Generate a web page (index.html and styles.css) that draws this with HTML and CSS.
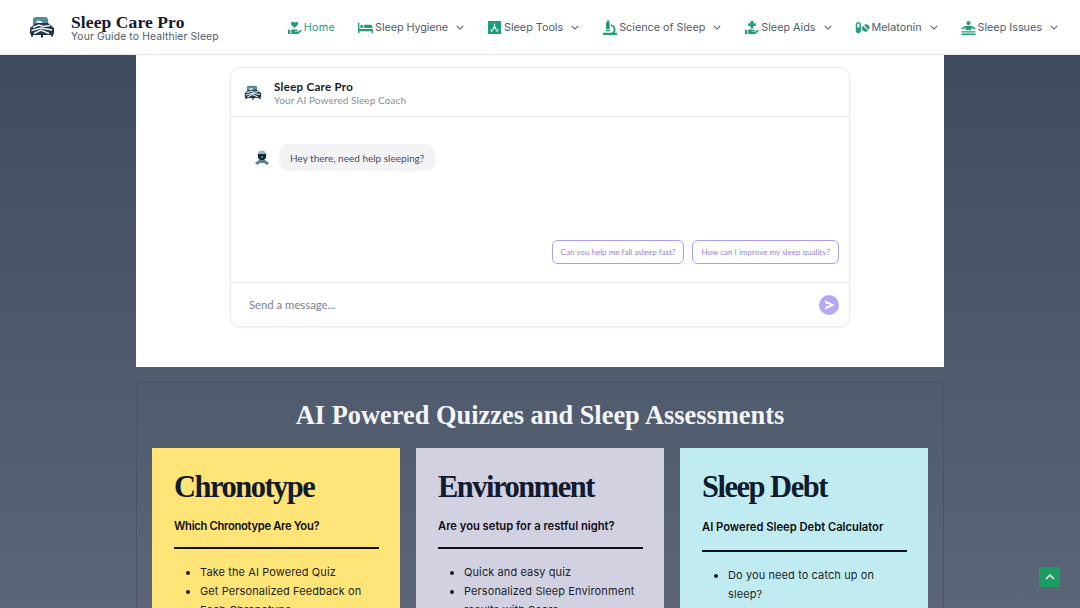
FILE: index.html
```html
<!DOCTYPE html>
<html lang="en">
<head>
<meta charset="utf-8">
<title>Sleep Care Pro</title>
<link rel="stylesheet" href="styles.css">
</head>
<body>
<svg class="defs" width="0" height="0" aria-hidden="true">
  <symbol id="bed-logo" viewBox="0 0 26 22">
    <path d="M4 9V4C4 2 5 1 7 1h9c2 0 3 1 3 3v3z" fill="#4f8f9b"/>
    <path d="M6.500 8c0-2 1.500-3.500 3.500-3.500S14 6 14 7z" fill="#dfeef0"/>
    <path d="M1 12l6-5h12l6 5v5c0 1-1 2-2 2H3c-1 0-2-1-2-2z" fill="#24364a"/>
    <path d="M4 11.500l6-2.500 4 1.500 7-1M2.500 14.500l9.500-2.500 11 2M5 17.500l7-3.500 8 3.500" stroke="#eef4f5" stroke-width="1.500" fill="none"/>
    <path d="M12 18h2v3.500h-2zM2 18.500h2v2H2zM22 18.500h2v2h-2z" fill="#1d2b3a"/>
  </symbol>
  <symbol id="chev" viewBox="0 0 10 6">
    <path d="M1 1l4 4 4-4" fill="none" stroke="currentColor" stroke-width="1.300"/>
  </symbol>
</svg>

<header class="site-header">
  <a class="brand">
    <svg class="brand-logo"><use href="#bed-logo"/></svg>
    <span class="brand-text">
      <span class="brand-name">Sleep Care Pro</span>
      <span class="brand-tag">Your Guide to Healthier Sleep</span>
    </span>
  </a>
  <nav class="nav">
    <a class="nav-item nav-home">
      <svg class="nav-icon" viewBox="0 0 16 16"><path d="M8 8.500L4.700 5.200C3.600 3.900 4.300 1.800 6 1.800c.9 0 1.500.4 2 1.100.5-.7 1.100-1.100 2-1.100 1.700 0 2.400 2.100 1.300 3.400z"/><path d="M1 10.500h2.500v4.500H1zM4.500 10.500c1.500-1 3-1 4.500 0h2c.8 0 .8 1.500 0 1.500H8v.6h3.500l3-2c1-.4 1.500.5 1 1.200L12 15H4.500z"/></svg>
      Home
    </a>
    <a class="nav-item nav-hygiene">
      <svg class="nav-icon" viewBox="0 0 16 16"><path d="M0 3h1.500v6.500H16V14h-1.500v-2h-13v2H0z"/><circle cx="4" cy="6.800" r="1.700"/><path d="M6.500 5h6.500c1.500 0 2.500 1 2.500 3.500h-9z"/></svg>
      Sleep Hygiene
      <svg class="chev"><use href="#chev"/></svg>
    </a>
    <a class="nav-item">
      <svg class="nav-icon" viewBox="0 0 16 16"><path fill-rule="evenodd" d="M1 1h14v14H1zM8 3.500L7 5.300l.6 1L4 12.500h1.500L8 8.200l2.500 4.300H12L8.400 6.300l.6-1zM3.500 10v1h2.400l.6-1zM9.500 10l.6 1h2.400v-1z"/></svg>
      Sleep Tools
      <svg class="chev"><use href="#chev"/></svg>
    </a>
    <a class="nav-item">
      <svg class="nav-icon" viewBox="0 0 16 16"><path d="M5 .5h3v1.500H7.500v1h.7v6.500H4.300V3h.7V2H5zM9.500 4.500c3.500.5 5 3 5 5.500 0 1.500-.5 2.500-1.200 3.500H16V16H1v-2.500h8.500c1.800 0 3-1.500 3-3.500 0-1.700-1-3-3-3.500zM4 10.500h4.500V12H4z"/></svg>
      Science of Sleep
      <svg class="chev"><use href="#chev"/></svg>
    </a>
    <a class="nav-item">
      <svg class="nav-icon" viewBox="0 0 16 16"><path d="M7 1h3v2.500h2.500v3H10V9H7V6.500H4.500v-3H7z"/><path d="M1 10.500h2.500v4.500H1zM4.500 10.500c1.500-1 3-1 4.500 0h2c.8 0 .8 1.500 0 1.500H8v.6h3.500l3-2c1-.4 1.500.5 1 1.200L12 15H4.500z"/></svg>
      Sleep Aids
      <svg class="chev"><use href="#chev"/></svg>
    </a>
    <a class="nav-item">
      <svg class="nav-icon" viewBox="0 0 16 16"><path d="M3.500 2C5 2 6.300 3.200 6.300 4.800v6.400C6.300 12.800 5 14 3.500 14S.8 12.800.8 11.200V4.800C.8 3.200 2 2 3.500 2zM2.300 5v3h2.400V5c0-.7-.5-1.300-1.200-1.300S2.300 4.300 2.300 5z" fill-rule="evenodd"/><path d="M8.500 6.200l5.600 5.200c-1.600 1.500-4.200 1.400-5.700-.2-1.400-1.400-1.400-3.600.1-5zM9.500 5.300c1.500-1.100 3.700-1 5 .4 1.300 1.400 1.300 3.500.2 4.900z"/></svg>
      Melatonin
      <svg class="chev"><use href="#chev"/></svg>
    </a>
    <a class="nav-item">
      <svg class="nav-icon" viewBox="0 0 16 16"><circle cx="8" cy="3.200" r="2.200"/><path d="M5 6h6l4.500 2.500v1.500L11 8.500V11H5V8.500L.5 10V8.500zM.5 12h15v1.300H.5zM.5 14.500h15V16H.5z"/></svg>
      Sleep Issues
      <svg class="chev"><use href="#chev"/></svg>
    </a>
  </nav>
</header>

<main class="page">
  <section class="panel">
    <div class="chat">
      <div class="chat-head">
        <svg class="chat-logo"><use href="#bed-logo"/></svg>
        <div class="chat-names">
          <div class="chat-title">Sleep Care Pro</div>
          <div class="chat-sub">Your AI Powered Sleep Coach</div>
        </div>
      </div>
      <div class="chat-body">
        <div class="msg">
          <svg class="avatar" viewBox="0 0 16 16">
            <circle cx="8" cy="5" r="4.500" fill="#9fb4bd"/>
            <path d="M4 4h8v4l-2 2H6L4 8z" fill="#14283a"/>
            <path d="M1 13l4-3h6l4 3-2 2-3-2H6l-3 2z" fill="#5f7f8c"/>
            <circle cx="8" cy="7" r="1" fill="#4fb4c8"/>
          </svg>
          <div class="bubble">Hey there, need help sleeping?</div>
        </div>
        <div class="prompts">
          <button class="prompt">Can you help me fall asleep fast?</button>
          <button class="prompt">How can I improve my sleep quality?</button>
        </div>
      </div>
      <div class="chat-input">
        <span class="placeholder">Send a message...</span>
        <span class="send"><svg viewBox="0 0 12 12"><path d="M1.500 1l10 5-10 5 1.500-4h3.500V5H3z" fill="#fff"/></svg></span>
      </div>
    </div>
  </section>

  <section class="quizzes">
    <h2 class="quizzes-title">AI Powered Quizzes and Sleep Assessments</h2>
    <div class="cards">
      <article class="card card-yellow">
        <h3 class="card-title">Chronotype</h3>
        <p class="card-sub">Which Chronotype Are You?</p>
        <hr class="card-rule">
        <ul class="card-list">
          <li>Take the AI Powered Quiz</li>
          <li>Get Personalized Feedback on Each Chronotype</li>
        </ul>
      </article>
      <article class="card card-lilac">
        <h3 class="card-title">Environment</h3>
        <p class="card-sub">Are you setup for a restful night?</p>
        <hr class="card-rule">
        <ul class="card-list">
          <li>Quick and easy quiz</li>
          <li>Personalized Sleep Environment results with Score</li>
        </ul>
      </article>
      <article class="card card-cyan">
        <h3 class="card-title">Sleep Debt</h3>
        <p class="card-sub card-sub-low">AI Powered Sleep Debt Calculator</p>
        <hr class="card-rule">
        <ul class="card-list">
          <li>Do you need to catch up on sleep?</li>
        </ul>
      </article>
    </div>
  </section>
</main>

<a class="to-top"><svg viewBox="0 0 10 6"><path d="M1 5l4-4 4 4" fill="none" stroke="#fff" stroke-width="1.500"/></svg></a>
</body>
</html>
```
FILE: styles.css
```css
* { box-sizing: border-box; }
html, body { margin: 0; height: 100%; overflow: hidden; }
body {
  position: relative;
  background: linear-gradient(180deg, #3c495e 0, #5b6577 100%);
  font-family: "Inter", "Open Sans", sans-serif;
  color: #111827;
}
.defs { position: absolute; }

.site-header {
  height: 55px;
  background: #fff;
  border-bottom: 1px solid #e2e4e6;
  display: flex;
  align-items: center;
  justify-content: space-between;
  padding: 0 22px 0 29px;
  white-space: nowrap;
}
.brand { display: flex; align-items: center; gap: 16px; }
.brand-logo { width: 26px; height: 22px; }
.brand-text { display: flex; flex-direction: column; padding-top: 2px; }
.brand-name {
  font: 700 17.500px/15px "Liberation Serif", serif;
  letter-spacing: .1px;
  color: #15192a;
}
.brand-tag {
  font: 400 10.300px/12px "Inter", sans-serif;
  letter-spacing: .15px;
  color: #4d5a6c;
}
.nav { display: flex; align-items: center; gap: 23px; }
.nav-item {
  display: flex;
  align-items: center;
  font-size: 10.800px;
  color: #4f5b6c;
  gap: 2px;
}
.nav-icon { width: 15px; height: 15px; fill: #1f9d7d; }
.nav-home { color: #1f9d7d; letter-spacing: .25px; }
.nav-hygiene { letter-spacing: -.08px; }
.chev { width: 8px; height: 5px; margin-left: 6px; color: #4f5b6c; }

.page { width: 808px; margin: 0 auto; }

.panel { background: #fff; height: 312px; padding: 12px 94px 0; }
.chat {
  height: 260px;
  border: 1px solid #e8e9ee;
  border-radius: 10px;
  display: flex;
  flex-direction: column;
  box-shadow: 0 1px 2px rgba(0,0,0,.05);
  font-family: "Lato", "Inter", sans-serif;
}
.chat-head {
  height: 49px;
  display: flex;
  align-items: center;
  gap: 12px;
  padding: 0 13px;
  border-bottom: 1px solid #ebecf0;
}
.chat-names { padding-top: 3px; }
.chat-logo { width: 18px; height: 15px; }
.chat-title { font-size: 11.500px; font-weight: 700; letter-spacing: .3px; color: #16181f; line-height: 14px; }
.chat-sub { font-size: 10px; color: #8a8d99; letter-spacing: .1px; line-height: 13px; }
.chat-body { flex: 1; display: flex; flex-direction: column; justify-content: space-between; padding: 27px 10px 18px 23px; }
.msg { display: flex; align-items: center; gap: 9px; }
.avatar { width: 16px; height: 16px; }
.bubble {
  background: #f3f3f6;
  border-radius: 9px;
  height: 27px;
  padding: 0 11px;
  display: flex;
  align-items: center;
  font-size: 10px;
  color: #4b4d5a;
}
.prompts { display: flex; justify-content: flex-end; gap: 8px; }
.prompt {
  height: 24px;
  background: #fff;
  border: 1px solid #a99ff0;
  border-radius: 6px;
  padding: 0 8px;
  font: 400 8.050px "Lato", sans-serif;
  color: #9085e8;
}
.chat-input {
  height: 44px;
  border-top: 1px solid #ebecf0;
  display: flex;
  align-items: center;
  justify-content: space-between;
  padding: 0 10px 0 18px;
}
.placeholder { font-size: 11.300px; color: #7d7f8b; }
.send {
  width: 20px; height: 20px;
  border-radius: 50%;
  background: #b3a8f5;
  display: flex;
  align-items: center;
  justify-content: center;
}
.send svg { width: 12px; height: 12px; }

.quizzes {
  margin-top: 15px;
  height: 400px;
  border: 1px solid #4a5468;
  padding: 15px 15px 0;
}
.quizzes-title {
  margin: 0 0 16px;
  text-align: center;
  font: 700 26.400px/34px "Liberation Serif", serif;
  color: #f4f5f7;
}
.cards { display: grid; grid-template-columns: repeat(3, 248px); justify-content: space-between; }
.card { height: 300px; padding: 20px 21px 0 22px; }
.card-yellow { background: #ffe477; }
.card-lilac { background: #d2d1e2; }
.card-cyan { background: #c0ecf1; }
.card-title {
  margin: 0;
  font: 700 30.500px/38px "Liberation Serif", serif;
  letter-spacing: -1.500px;
  color: #111a2e;
}
.card-sub {
  margin: 12px 0 0;
  font-size: 11.200px;
  line-height: 16px;
  font-weight: 600;
  color: #0c0c10;
}
.card-yellow .card-sub { letter-spacing: -.3px; }
.card-sub-low { margin-top: 13px; }
.card-rule { margin: 13px 0 0; border: 0; border-top: 2px solid #111; }
.card-sub-low + .card-rule { margin-top: 15px; }
.card-list {
  margin: 14px 0 0;
  padding: 0 0 0 26px;
  font-size: 11px;
  line-height: 19px;
  letter-spacing: .1px;
  color: #1c1f26;
}
.to-top {
  position: absolute;
  left: 1039px;
  top: 567px;
  width: 21px;
  height: 20px;
  background: #1a9c63;
  display: flex;
  align-items: center;
  justify-content: center;
}
.to-top svg { width: 10px; height: 6px; }
```
